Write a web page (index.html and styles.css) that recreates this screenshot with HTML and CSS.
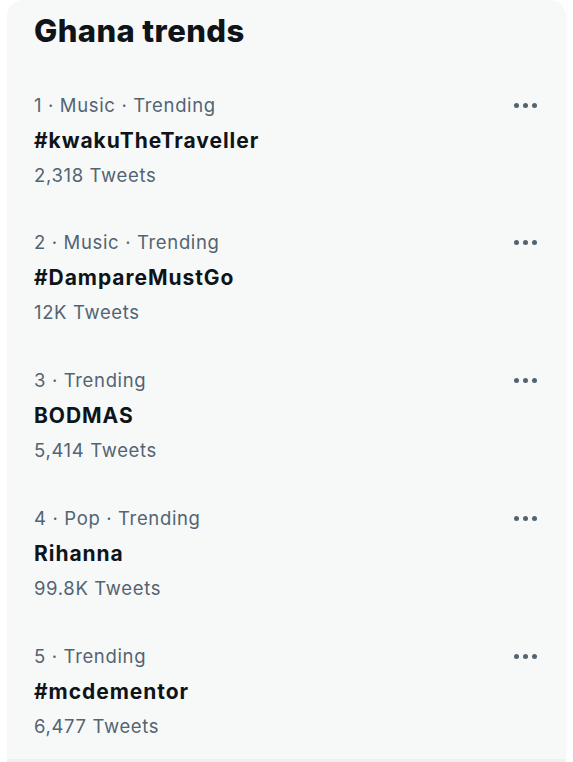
FILE: index.html
```html
<!DOCTYPE html>
<html lang="en">
<head>
<meta charset="utf-8">
<title>Ghana trends</title>
<link rel="stylesheet" href="styles.css">
</head>
<body>
<aside class="panel">
  <h2 class="title">Ghana trends</h2>
  <div class="trend">
    <div class="text">
      <div class="meta">1 · Music · Trending</div>
      <div class="name">#kwakuTheTraveller</div>
      <div class="count">2,318 Tweets</div>
    </div>
    <div class="more"><span></span><span></span><span></span></div>
  </div>
  <div class="trend">
    <div class="text">
      <div class="meta">2 · Music · Trending</div>
      <div class="name">#DampareMustGo</div>
      <div class="count">12K Tweets</div>
    </div>
    <div class="more"><span></span><span></span><span></span></div>
  </div>
  <div class="trend">
    <div class="text">
      <div class="meta">3 · Trending</div>
      <div class="name">BODMAS</div>
      <div class="count">5,414 Tweets</div>
    </div>
    <div class="more"><span></span><span></span><span></span></div>
  </div>
  <div class="trend">
    <div class="text">
      <div class="meta">4 · Pop · Trending</div>
      <div class="name">Rihanna</div>
      <div class="count">99.8K Tweets</div>
    </div>
    <div class="more"><span></span><span></span><span></span></div>
  </div>
  <div class="trend">
    <div class="text">
      <div class="meta">5 · Trending</div>
      <div class="name">#mcdementor</div>
      <div class="count">6,477 Tweets</div>
    </div>
    <div class="more"><span></span><span></span><span></span></div>
  </div>
  <div class="footer"></div>
</aside>
</body>
</html>
```

FILE: styles.css
```css
html, body {
  margin: 0;
  padding: 0;
  background: #ffffff;
}
body {
  font-family: Inter, "Liberation Sans", Arial, sans-serif;
  color: #0f1419;
}
.panel {
  margin-left: 7px;
  width: 559px;
  background: #f7f9f9;
  border-radius: 16px 16px 0 0;
  overflow: hidden;
}
.title {
  margin: 0;
  padding: 13px 27px 21.5px;
  font-size: 31px;
  line-height: 36px;
  font-weight: 800;
  letter-spacing: 0.4px;
}
.trend {
  display: flex;
  justify-content: space-between;
  align-items: flex-start;
  padding: 17px 29px 15.75px 27px;
}
.meta, .count {
  font-size: 18.5px;
  line-height: 35px;
  color: #536471;
  letter-spacing: 0.65px;
}
.name {
  font-size: 21px;
  line-height: 35px;
  font-weight: 700;
  letter-spacing: 0.95px;
}
.more {
  display: flex;
  gap: 4px;
  padding-top: 15px;
}
.more span {
  width: 5px;
  height: 5px;
  border-radius: 50%;
  background: #536471;
}
.footer {
  height: 10px;
  background: #eff1f1;
}
```
